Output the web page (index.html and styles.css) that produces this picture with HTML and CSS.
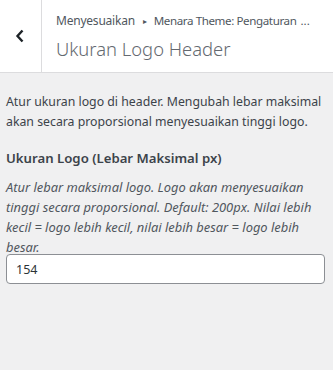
FILE: index.html
```html
<!DOCTYPE html>
<html lang="id">
<head>
<meta charset="utf-8">
<link rel="stylesheet" href="styles.css">
</head>
<body>
<div class="panel">
  <header class="head">
    <button class="back" aria-label="Kembali">
      <svg width="10" height="14" viewBox="0 0 10 14"><polyline points="7.5,1.5 2.5,7 7.5,12.5" fill="none" stroke="#1d2327" stroke-width="2.4"/></svg>
    </button>
    <div class="titles">
      <div class="crumb"><span>Menyesuaikan</span><span class="tri">&#9656;</span><span class="crumb-cur">Menara Theme: Pengaturan</span><span class="dots">...</span></div>
      <h1 class="title">Ukuran Logo Header</h1>
    </div>
  </header>
  <main class="content">
    <p class="desc">Atur ukuran logo di header. Mengubah lebar maksimal akan secara proporsional menyesuaikan tinggi logo.</p>
    <label class="label" for="logo">Ukuran Logo (Lebar Maksimal px)</label>
    <p class="hint">Atur lebar maksimal logo. Logo akan menyesuaikan tinggi secara proporsional. Default: 200px. Nilai lebih kecil = logo lebih kecil, nilai lebih besar = logo lebih besar.</p>
    <input class="field" id="logo" type="text" value="154">
  </main>
</div>
</body>
</html>
```
FILE: styles.css
```css
html, body {
  margin: 0;
  padding: 0;
  background: #f0f0f1;
}
body {
  width: 333px;
  height: 370px;
  overflow: hidden;
  font-family: "Noto Sans", "Open Sans", sans-serif;
  color: #3c434a;
}
.panel {
  display: flex;
  flex-direction: column;
}
.head {
  display: flex;
  height: 72px;
  background: #fff;
  border-bottom: 1px solid #dcdcde;
}
.back {
  flex: none;
  width: 42px;
  border: 0;
  border-right: 1px solid #dcdcde;
  background: #fff;
  padding: 0;
  display: flex;
  align-items: center;
  justify-content: center;
}
.back svg { display: block; margin-left: -1px; }
.titles {
  flex: 1;
  padding: 11px 0 0 14px;
  display: flex;
  flex-direction: column;
  min-width: 0;
}
.crumb {
  display: flex;
  align-items: baseline;
  font-size: 12px;
  letter-spacing: -0.22px;
  line-height: 20px;
  color: #50575e;
  white-space: nowrap;
}
.crumb-cur {
  font-size: 11.6px;
  letter-spacing: -0.4px;
}
.dots {
  margin-left: 4px;
  letter-spacing: 0;
  font-size: 11.6px;
}
.tri {
  font-size: 8px;
  margin: 0 7px 0 8px;
  position: relative;
  top: -1px;
}
.title {
  margin: 4px 0 0;
  font-size: 18.4px;
  font-weight: 300;
  line-height: 26px;
  color: #646970;
}
.content {
  padding: 19px 6px 0;
  display: flex;
  flex-direction: column;
}
.desc {
  margin: 0 0 16px;
  font-size: 12.3px;
  line-height: 20px;
  color: #3c434a;
}
.label {
  font-size: 13.2px;
  font-weight: 600;
  line-height: 20px;
  color: #3c434a;
  margin-bottom: 9px;
}
.hint {
  margin: 0 0 -3px;
  font-size: 12.9px;
  font-style: italic;
  line-height: 20px;
  color: #50575e;
}
.field {
  box-sizing: border-box;
  width: 319px;
  height: 30px;
  border: 1px solid #8c8f94;
  border-radius: 4px;
  padding: 0 9px;
  font-family: inherit;
  font-size: 12.5px;
  color: #2c3338;
  background: #fff;
}
```
